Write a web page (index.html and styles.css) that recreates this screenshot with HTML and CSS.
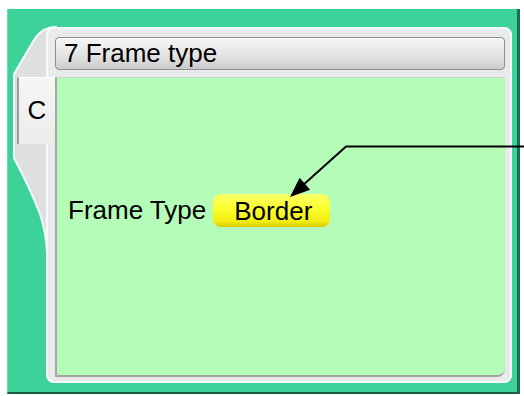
FILE: index.html
```html
<!DOCTYPE html>
<html lang="en">
  <head>
    <meta charset="UTF-8" />
    <meta name="viewport" content="width=device-width, initial-scale=1.0" />
    <title>Frame type</title>
    <link rel="stylesheet" href="styles.css">
  </head>
  <body>
    <div class="screen">
      <!-- side wing behind the tab -->
      <svg class="wing" width="513" height="385" viewBox="7 9 513 385">
        <path d="M56,27 Q42,27 34,40 L14,74 L14,158 Q30,188 40,214 Q46,232 47,252 L56,252 Z" fill="#dedfe0" stroke="#f3fffb" stroke-width="2" />
      </svg>

      <div class="tab">C</div>

      <div class="frame">
        <div class="title">7 Frame type</div>
        <div class="content">
          <div class="row">
            <span class="label">Frame Type</span>
            <span class="btn">Border</span>
          </div>
        </div>
      </div>
    </div>

    <!-- callout arrow -->
    <svg class="callout" width="524" height="396" viewBox="0 0 524 396">
      <polyline points="524,146.5 346,146.5 302,186" fill="none" stroke="#000" stroke-width="2" />
      <polygon points="290,197 299.6,177.7 310.2,189.7" fill="#000" />
    </svg>
  </body>
</html>
```

FILE: styles.css
```css
body {
  margin: 0;
  padding: 9px 0 0 7px;
  background-color: #fff;
  font-family: "Liberation Sans", Arial, sans-serif;
  width: 524px;
  height: 396px;
  box-sizing: border-box;
  position: relative;
  overflow: hidden;
}

.screen {
  position: relative;
  width: 513px;
  height: 385px;
  box-sizing: border-box;
  padding: 18px 0 0 38px;
  background-color: #3dd29a; /* vert d'eau */
  border-left: 1px solid #5fe0b0;
  border-right: 3px solid #1f6e50;
  border-bottom: 2px solid #1f5a42;
}

.wing {
  position: absolute;
  left: -1px;
  top: 0;
}

.tab {
  position: absolute;
  left: 9px;
  top: 68px;
  width: 36px;
  height: 66px;
  background: linear-gradient(#f6f6f6, #ececec);
  border-left: 2px solid #9c9c9c;
  border-top: 1px solid #fff;
  font-size: 26px;
  line-height: 64px;
  text-align: center;
  color: #000;
  z-index: 2;
}

.frame {
  position: relative;
  width: 466px;
  height: 356px;
  box-sizing: border-box;
  padding: 10px 7px 6px 9px;
  background-color: #e9eaeb;
  border-radius: 8px;
  box-shadow: inset 0 0 0 2px #f7fafa;
  display: flex;
  flex-direction: column;
  gap: 7px;
  z-index: 1;
}

.title {
  height: 33px;
  box-sizing: border-box;
  padding-left: 8px;
  background: linear-gradient(#f6f6f6, #e4e4e4 55%, #cbcbcb);
  border: 1px solid #8e8e8e;
  border-radius: 4px;
  box-shadow: inset 0 1px 0 #fff;
  font-size: 26px;
  line-height: 31px;
  color: #000;
}

.content {
  flex: 1;
  background-color: #b6fcb9;
  border-left: 2px solid #a6a6a6;
  border-bottom: 2px solid #a2a2a2;
  border-top: 1px solid #c8d8c8;
  border-radius: 0 0 8px 0;
  padding: 116px 0 0 11px;
}

.row {
  display: flex;
  align-items: center;
  gap: 7px;
  height: 33px;
  font-size: 26px;
  line-height: 33px;
  color: #000;
}

.btn {
  display: block;
  height: 33px;
  box-sizing: border-box;
  padding: 0 18px 0 21px;
  background: linear-gradient(#fbff6a, #fbff2a 45%, #f0ea10 85%, #d8c800);
  border-radius: 8px;
  line-height: 35px;
}

.callout {
  position: absolute;
  left: 0;
  top: 0;
  z-index: 5;
}
```
